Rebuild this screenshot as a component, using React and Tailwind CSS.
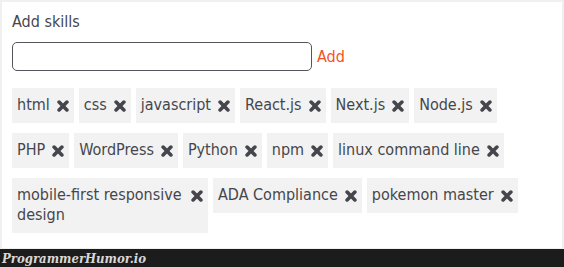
import { useState } from 'react'

const initialSkills = [
  'html', 'css', 'javascript', 'React.js', 'Next.js', 'Node.js',
  'PHP', 'WordPress', 'Python', 'npm', 'linux command line',
  'mobile-first responsive design', 'ADA Compliance', 'pokemon master',
]

function RemoveIcon() {
  return (
    <svg width="12" height="12" viewBox="0 0 12 12" className="text-[#45464c]">
      <path d="M2.1 2.1 L9.9 9.9 M9.9 2.1 L2.1 9.9" stroke="currentColor" strokeWidth="3.6" strokeLinecap="round" />
    </svg>
  )
}

export default function App() {
  const [skills, setSkills] = useState(initialSkills)
  const [value, setValue] = useState('')

  const addSkill = () => {
    if (!value.trim()) return
    setSkills([...skills, value.trim()])
    setValue('')
  }

  return (
    <div className="w-[564px] h-[267px] bg-[#f0f0f0] flex flex-col overflow-hidden" style={{ fontFamily: '"DejaVu Sans Condensed", "DejaVu Sans", sans-serif' }}>
      <div className="flex-1 ml-[2px] mr-[2px] mt-[2px] mb-px bg-white px-[10px] pt-[10px] text-[#45464c]">
        <p className="text-[16px] leading-5">Add skills</p>

        <div className="flex items-center mt-[10px]">
          <input
            value={value}
            onChange={e => setValue(e.target.value)}
            className="w-[300px] h-[29px] border border-[#55555e] rounded-[5px] px-2 outline-none"
          />
          <button onClick={addSkill} className="ml-[5px] text-[16px] leading-5 text-[#f4511e]">Add</button>
        </div>

        <div className="flex flex-wrap items-start gap-x-[5px] gap-y-[10px] mt-[17px]">
          {skills.map(skill => (
            <div key={skill} className="flex items-start max-w-[196px] bg-[#f2f2f2] pl-[5px] pr-[5px] pt-[7px] pb-[8px] text-[16px] leading-5">
              <span>{skill}</span>
              <button
                onClick={() => setSkills(skills.filter(s => s !== skill))}
                className="ml-[7px] h-5 flex items-center shrink-0 translate-y-[1px]"
              >
                <RemoveIcon />
              </button>
            </div>
          ))}
        </div>
      </div>

      <div className="h-[18px] bg-[#1c1c1c] flex items-center px-[2px]">
        <span className="text-[#d8d8d8] italic font-bold text-[13px] leading-none" style={{ fontFamily: '"DejaVu Serif Condensed", "DejaVu Serif", serif' }}>
          ProgrammerHumor.io
        </span>
      </div>
    </div>
  )
}
